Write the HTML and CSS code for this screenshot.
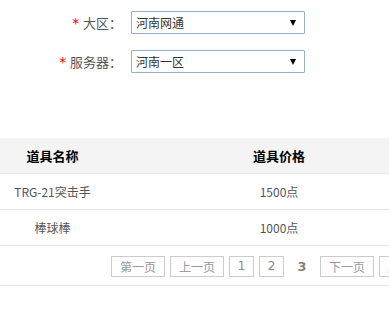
FILE: index.html
```html
<!DOCTYPE html>
<html>
<head>
	<meta charset="UTF-8">
	<title>道具列表</title>
	<link rel="stylesheet" href="styles.css">
</head>
<body>
	<div class="page">
		<div class="form">
			<div class="form-row">
				<label class="label"><span class="star">*</span>大区：</label>
				<div class="select">
					<span class="select-text">河南网通</span>
					<span class="arrow"></span>
				</div>
			</div>
			<div class="form-row">
				<label class="label"><span class="star">*</span>服务器：</label>
				<div class="select">
					<span class="select-text">河南一区</span>
					<span class="arrow"></span>
				</div>
			</div>
		</div>

		<table class="items">
			<thead>
				<tr>
					<th class="col-name">道具名称</th>
					<th class="col-price">道具价格</th>
					<th class="col-op"></th>
				</tr>
			</thead>
			<tbody>
				<tr>
					<td>TRG-21突击手</td>
					<td>1500点</td>
					<td></td>
				</tr>
				<tr>
					<td>棒球棒</td>
					<td>1000点</td>
					<td></td>
				</tr>
			</tbody>
		</table>

		<div class="pager">
			<a class="pg">第一页</a>
			<a class="pg">上一页</a>
			<a class="pg num">1</a>
			<a class="pg num">2</a>
			<span class="pg num current">3</span>
			<a class="pg">下一页</a>
			<a class="pg">尾页</a>
		</div>
	</div>
</body>
</html>
```

FILE: styles.css
```css
body {
	margin: 0;
	padding: 0;
	background: #fff;
	font-family: "Noto Sans CJK SC", "DejaVu Sans", sans-serif;
	font-size: 12px;
	color: #555;
	overflow: hidden;
}
.page {
	width: 600px;
}
.form {
	display: flex;
	flex-direction: column;
	gap: 16px;
	padding-top: 11px;
}
.form-row {
	display: flex;
	align-items: center;
	height: 23px;
}
.label {
	width: 122px;
	text-align: right;
	font-size: 13px;
	color: #555;
	line-height: 23px;
}
.star {
	color: #f00;
	font-size: 14px;
	margin-right: 3px;
	font-family: "DejaVu Sans Mono", monospace;
}
.select {
	margin-left: 9px;
	width: 174px;
	height: 23px;
	box-sizing: border-box;
	border: 1px solid #95b0cc;
	border-radius: 1px;
	display: flex;
	align-items: center;
	justify-content: space-between;
	padding: 0 8px 0 4px;
	background: #fff;
}
.select-text {
	font-size: 12px;
	color: #333;
}
.arrow {
	width: 0;
	height: 0;
	border-left: 3px solid transparent;
	border-right: 3px solid transparent;
	border-top: 6px solid #000;
}
.items {
	margin-top: 65px;
	width: 600px;
	border-collapse: collapse;
	table-layout: fixed;
}
.items th {
	height: 35px;
	padding: 0;
	line-height: 16px;
	background: #f4f4f4;
	font-size: 13px;
	font-weight: bold;
	color: #000;
	border-bottom: 1px solid #e6e6e6;
}
.items td {
	height: 35px;
	padding: 0;
	line-height: 16px;
	text-align: center;
	font-size: 12px;
	color: #555;
	border-bottom: 1px solid #e6e6e6;
}
.col-name {
	width: 105px;
}
.col-price {
	width: 348px;
}
.pager {
	display: flex;
	gap: 5px;
	padding: 10px 0 8px 111px;
	border-bottom: 1px solid #e6e6e6;
}
.pg {
	height: 21px;
	box-sizing: border-box;
	border: 1px solid #ccc;
	padding: 0 8px;
	line-height: 19px;
	font-size: 12px;
	color: #999;
	text-align: center;
}
.num {
	width: 25px;
	padding: 0;
	font-family: "DejaVu Sans", sans-serif;
	color: #888;
}
.current {
	width: 26px;
	border-color: transparent;
	font-weight: bold;
	font-size: 13px;
	color: #8a8478;
}
```
